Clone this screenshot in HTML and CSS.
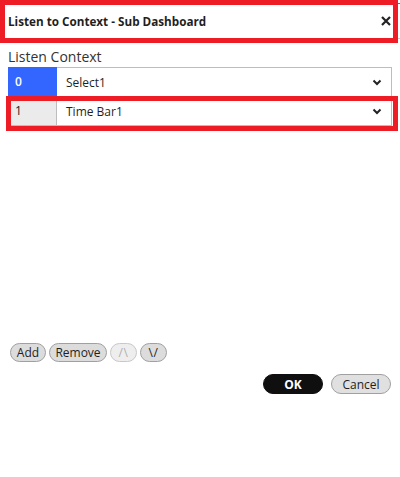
FILE: index.html
```html
<!DOCTYPE html>
<html>
<head>
<meta charset="utf-8">
<link rel="stylesheet" href="styles.css">
</head>
<body>
<div class="dialog">
  <div class="header">
    <span class="title">Listen to Context - Sub Dashboard</span>
    <svg class="close" width="10" height="10" viewBox="0 0 10 10"><path d="M1 1 L9 9 M9 1 L1 9" stroke="#222" stroke-width="2.2" fill="none"/></svg>
  </div>
  <div class="body">
    <div class="label">Listen Context</div>
    <div class="table">
      <div class="row active">
        <div class="idx">0</div>
        <div class="val"><span>Select1</span>
          <svg class="chev" width="10" height="7" viewBox="0 0 10 7"><path d="M1.5 1.5 L5 5 L8.5 1.5" stroke="#222" stroke-width="2" fill="none"/></svg>
        </div>
      </div>
      <div class="row">
        <div class="idx">1</div>
        <div class="val"><span>Time Bar1</span>
          <svg class="chev" width="10" height="7" viewBox="0 0 10 7"><path d="M1.5 1.5 L5 5 L8.5 1.5" stroke="#222" stroke-width="2" fill="none"/></svg>
        </div>
      </div>
    </div>
    <div class="spacer"></div>
    <div class="toolbar">
      <button class="pill add">Add</button>
      <button class="pill remove">Remove</button>
      <button class="pill arrow disabled">/\</button>
      <button class="pill arrow">\/</button>
    </div>
    <div class="actions">
      <button class="btn primary">OK</button>
      <button class="btn">Cancel</button>
    </div>
  </div>
  <div class="mark mark-title"></div>
  <div class="mark mark-row"></div>
</div>
</body>
</html>
```
FILE: styles.css
```css
html, body {
  margin: 0;
  padding: 0;
  background: #fff;
}
body {
  font-family: "Open Sans", "Noto Sans", sans-serif;
  color: #1f1f1f;
}
.dialog {
  position: relative;
  width: 400px;
  height: 477px;
  display: flex;
  flex-direction: column;
}
.header {
  margin-top: 3px;
  height: 34px;
  border-top: 1px solid #3366ff;
  border-bottom: 1px solid #cccccc;
  display: flex;
  align-items: center;
  justify-content: space-between;
  padding: 0 9px 0 8px;
}
.title {
  font-size: 11.7px;
  font-weight: 700;
  color: #1f1f1f;
}
.close {
  display: block;
}
.body {
  padding: 0 8px;
  display: flex;
  flex-direction: column;
  flex: 1;
}
.label {
  font-size: 14px;
  color: #333;
  margin-top: 8px;
  line-height: 20px;
  height: 20px;
}
.table {
  border: 1px solid #bdbdbd;
}
.row {
  display: flex;
  height: 28px;
}
.row + .row {
  border-top: 1px solid #bdbdbd;
}
.idx {
  width: 48px;
  flex: none;
  background: #ebebeb;
  border-right: 1px solid #bdbdbd;
  font-size: 12px;
  line-height: 28px;
  padding-left: 6px;
  box-sizing: border-box;
  color: #222;
}
.row.active .idx {
  background: #3366ff;
  color: #fff;
  font-weight: 600;
  margin: -1px 0 0 -1px;
  width: 49px;
  height: 29px;
  line-height: 30px;
  padding-left: 7px;
  border-right-color: #3366ff;
}
.val {
  flex: 1;
  display: flex;
  align-items: center;
  justify-content: space-between;
  padding: 0 9px;
  font-size: 12px;
  color: #1f1f1f;
}
.chev {
  display: block;
}
.spacer {
  flex: none;
  height: 217px;
}
.toolbar {
  display: flex;
  gap: 3px;
  padding-left: 2px;
}
.pill {
  font-family: inherit;
  font-size: 12px;
  color: #1f1f1f;
  height: 19px;
  padding: 0;
  border: 1px solid #a0a0a0;
  border-radius: 10px;
  background: #dcdcdc;
  line-height: 16px;
  margin: 0;
  text-align: center;
}
.pill.add {
  width: 36px;
}
.pill.remove {
  width: 58px;
}
.pill.arrow {
  width: 27px;
  letter-spacing: 0.5px;
}
.pill.disabled {
  color: #b0b0b0;
  background: #eeeeee;
  border-color: #c8c8c8;
}
.actions {
  display: flex;
  justify-content: flex-end;
  gap: 8px;
  margin-top: 12px;
  padding-right: 1px;
}
.btn {
  font-family: inherit;
  font-size: 12px;
  width: 60px;
  height: 20px;
  border-radius: 10px;
  border: 1px solid #a0a0a0;
  background: #e0e0e0;
  color: #1f1f1f;
  padding: 0;
  margin: 0;
}
.btn.primary {
  background: #0f0f0f;
  border-color: #0f0f0f;
  color: #fff;
  font-weight: 700;
}
.mark {
  position: absolute;
  border: 5px solid #ee1c25;
  box-sizing: border-box;
  pointer-events: none;
}
.mark-title {
  left: 0;
  top: 0;
  width: 398px;
  height: 43px;
}
.mark-row {
  left: 6px;
  top: 96px;
  width: 392px;
  height: 35px;
}
```
